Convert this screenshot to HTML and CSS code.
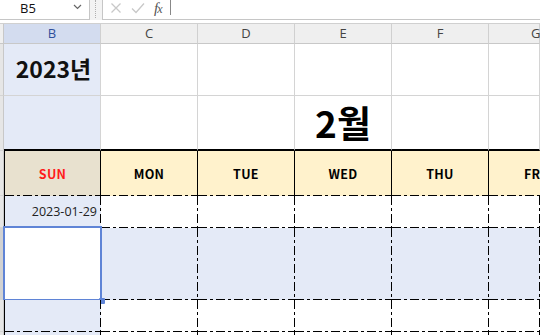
FILE: index.html
```html
<!DOCTYPE html>
<html>
<head>
<meta charset="utf-8">
<link rel="stylesheet" href="styles.css">
</head>
<body>
<div class="app">
  <div class="fbar">
    <div class="namebox"><span class="ref">B5</span><span class="chev">
      <svg width="9" height="6" viewBox="0 0 9 6"><path d="M1 1 L4.5 4.5 L8 1" fill="none" stroke="#666" stroke-width="1.2"/></svg></span></div>
    <div class="grip"></div>
    <div class="fbox">
      <span class="ic">
        <svg width="12" height="12" viewBox="0 0 12 12"><path d="M1.5 1.5 L10.5 10.5 M10.5 1.5 L1.5 10.5" stroke="#c8c8c8" stroke-width="1.3"/></svg>
      </span>
      <span class="ic">
        <svg width="14" height="12" viewBox="0 0 14 12"><path d="M1 6.5 L5 10.5 L13 1.5" fill="none" stroke="#c8c8c8" stroke-width="1.3"/></svg>
      </span>
      <span class="fx">f<span class="fxx">x</span></span>
      <span class="fsep"></span>
    </div>
  </div>
  <div class="gap"></div>
  <div class="row hdr">
    <div class="rh"></div>
    <div class="c ch sel">B</div>
    <div class="c ch">C</div>
    <div class="c ch">D</div>
    <div class="c ch">E</div>
    <div class="c ch">F</div>
    <div class="c ch last">G</div>
  </div>
  <div class="row r1">
    <div class="rh"></div>
    <div class="c g blue year">2023년</div>
    <div class="c g"></div>
    <div class="c g"></div>
    <div class="c g"></div>
    <div class="c g"></div>
    <div class="c g last"></div>
  </div>
  <div class="row r2">
    <div class="rh"></div>
    <div class="c g2 blue"></div>
    <div class="c g2"></div>
    <div class="c g2"></div>
    <div class="c g2 month"><span>2월</span></div>
    <div class="c g2"></div>
    <div class="c g2 last"></div>
  </div>
  <div class="row days">
    <div class="rh"></div>
    <div class="c d sun">SUN</div>
    <div class="c d">MON</div>
    <div class="c d">TUE</div>
    <div class="c d">WED</div>
    <div class="c d">THU</div>
    <div class="c d last">FRI</div>
  </div>
  <div class="row r4">
    <div class="rh"></div>
    <div class="c dd blue date">2023-01-29</div>
    <div class="c dd"></div>
    <div class="c dd"></div>
    <div class="c dd"></div>
    <div class="c dd"></div>
    <div class="c dd last"></div>
  </div>
  <div class="row r5">
    <div class="rh selrow"></div>
    <div class="c dd white"></div>
    <div class="c dd blue"></div>
    <div class="c dd blue"></div>
    <div class="c dd blue"></div>
    <div class="c dd blue"></div>
    <div class="c dd blue last"></div>
    <div class="selection"><div class="handle"></div></div>
  </div>
  <div class="row r6">
    <div class="rh"></div>
    <div class="c dd blue"></div>
    <div class="c dd"></div>
    <div class="c dd"></div>
    <div class="c dd"></div>
    <div class="c dd"></div>
    <div class="c dd last"></div>
  </div>
  <div class="row r7">
    <div class="rh"></div>
    <div class="c dd blue"></div>
    <div class="c dd"></div>
    <div class="c dd"></div>
    <div class="c dd"></div>
    <div class="c dd"></div>
    <div class="c dd last"></div>
  </div>
</div>
</body>
</html>
```
FILE: styles.css
```css
* { box-sizing: border-box; }
html, body { margin: 0; padding: 0; background: #fff; }
body { width: 540px; height: 335px; overflow: hidden; font-family: "Noto Sans CJK KR", "Noto Sans", sans-serif; }
.app { width: 540px; }

.fbar { display: flex; height: 20px; background: #f3f3f3; }
.namebox { width: 90px; height: 20px; background: #fff; border-right: 1px solid #c6c6c6; border-bottom: 1px solid #c6c6c6; display: flex; align-items: center; position: relative; }
.ref { margin-left: 20px; font-family: "Open Sans", "Noto Sans", sans-serif; font-size: 13px; color: #111; line-height: 16px; margin-top: -4px; }
.chev { position: absolute; right: 7px; top: 4px; display: flex; }
.grip { width: 12px; position: relative; }
.grip::after { content: ""; position: absolute; left: 5px; top: 0; bottom: 2px; width: 1px; border-left: 1px dotted #b0b0b0; }
.fbox { flex: 1; height: 20px; background: #fff; border-left: 1px solid #c6c6c6; border-bottom: 1px solid #c6c6c6; display: flex; align-items: center; padding-left: 7px; gap: 9px; }
.ic { display: flex; margin-top: -4px; }
.fx { font-family: "Liberation Serif", serif; font-style: italic; font-size: 15px; line-height: 16px; color: #555; margin-top: -2px; letter-spacing: -1px; }
.fxx { font-size: 12px; }
.fsep { width: 1px; height: 15px; background: #888; margin-left: -1px; margin-top: -4px; }

.gap { height: 4px; background: #fff; border-bottom: 1px solid #d0d0d0; }

.row { display: flex; position: relative; }
.rh { width: 4px; background: #e6e6e6; border-right: 1px solid #c8c8c8; border-bottom: 1px solid #d4d4d4; }
.c { width: 97px; flex: none; }
.c.last { width: 51px; }

.hdr { height: 20px; }
.hdr .rh { background: #efefef; border-bottom: 1px solid #c8c8c8; }
.ch { background: #efefef; border-right: 1px solid #d0d0d0; border-bottom: 1px solid #c8c8c8; font-family: "Open Sans", "Noto Sans", sans-serif; font-size: 13px; color: #444; display: flex; justify-content: center; align-items: center; line-height: 1; }
.ch.sel { background: #d3dcef; color: #2f4f9b; border-bottom-color: #c8c8c8; }
.ch.last { justify-content: flex-start; padding-left: 42px; }

.g { border-right: 1px solid #d4d4d4; border-bottom: 1px solid #d4d4d4; }
.r1 { height: 52px; }
.blue { background-color: #e4eaf7; }
.white { background-color: #fff; }
.year { display: flex; align-items: center; justify-content: center; font-weight: 700; font-size: 23px; color: #111; padding-bottom: 4px; padding-left: 3px; }

.r2 { height: 55px; }
.r2 .rh { border-bottom: 1px solid #d4d4d4; }
.g2 { border-right: 1px solid #d4d4d4; border-bottom: 2px solid #000; }
.month { position: relative; }
.month span { position: absolute; left: 0; right: 0; top: 2px; text-align: center; font-weight: 700; font-size: 37px; line-height: 48px; color: #000; }

.days { height: 45px; }
.d { background-color: #fff2cc; border-right: 1px solid #000; display: flex; align-items: center; justify-content: center; font-weight: 700; font-size: 12.5px; color: #000; letter-spacing: 0.3px;
  background-image: repeating-linear-gradient(to right, #000 0 9px, transparent 9px 12px, #000 12px 15px, transparent 15px 18px);
  background-size: 100% 1px; background-position: left bottom; background-repeat: no-repeat; padding-bottom: 1px; }
.d.last { justify-content: flex-start; padding-left: 35px; border-right: none; }
.sun { background-color: #e8e1cf; color: #ff1a1a; }
.days .c:nth-child(2) { border-left: 1px solid #000; width: 97px; }

.dd {
  background-image:
    repeating-linear-gradient(to right, #000 0 9px, transparent 9px 12px, #000 12px 15px, transparent 15px 18px),
    repeating-linear-gradient(to bottom, #000 0 9px, transparent 9px 12px, #000 12px 15px, transparent 15px 18px);
  background-size: 100% 1px, 1px 100%;
  background-position: left bottom, right top;
  background-repeat: no-repeat;
}
.r4 .dd:nth-child(2), .r5 .dd:nth-child(2), .r6 .dd:nth-child(2), .r7 .dd:nth-child(2) { border-left: 1px solid #000; }
.r4 { height: 32px; }
.r5 { height: 72px; }
.r6 { height: 32px; }
.r7 { height: 10px; }
.selrow { background: #d2d2d2; }
.date { display: flex; align-items: center; justify-content: flex-end; padding-right: 4px; font-family: "Open Sans", "Noto Sans", sans-serif; font-size: 12.5px; color: #222; padding-bottom: 1px; }

.selection { position: absolute; left: 3px; top: -2px; width: 99px; height: 75px; border: 2px solid #5f84d6; pointer-events: none; }
.handle { position: absolute; right: -5px; bottom: -5px; width: 6px; height: 6px; background: #5f84d6; border-radius: 1px; }
```
